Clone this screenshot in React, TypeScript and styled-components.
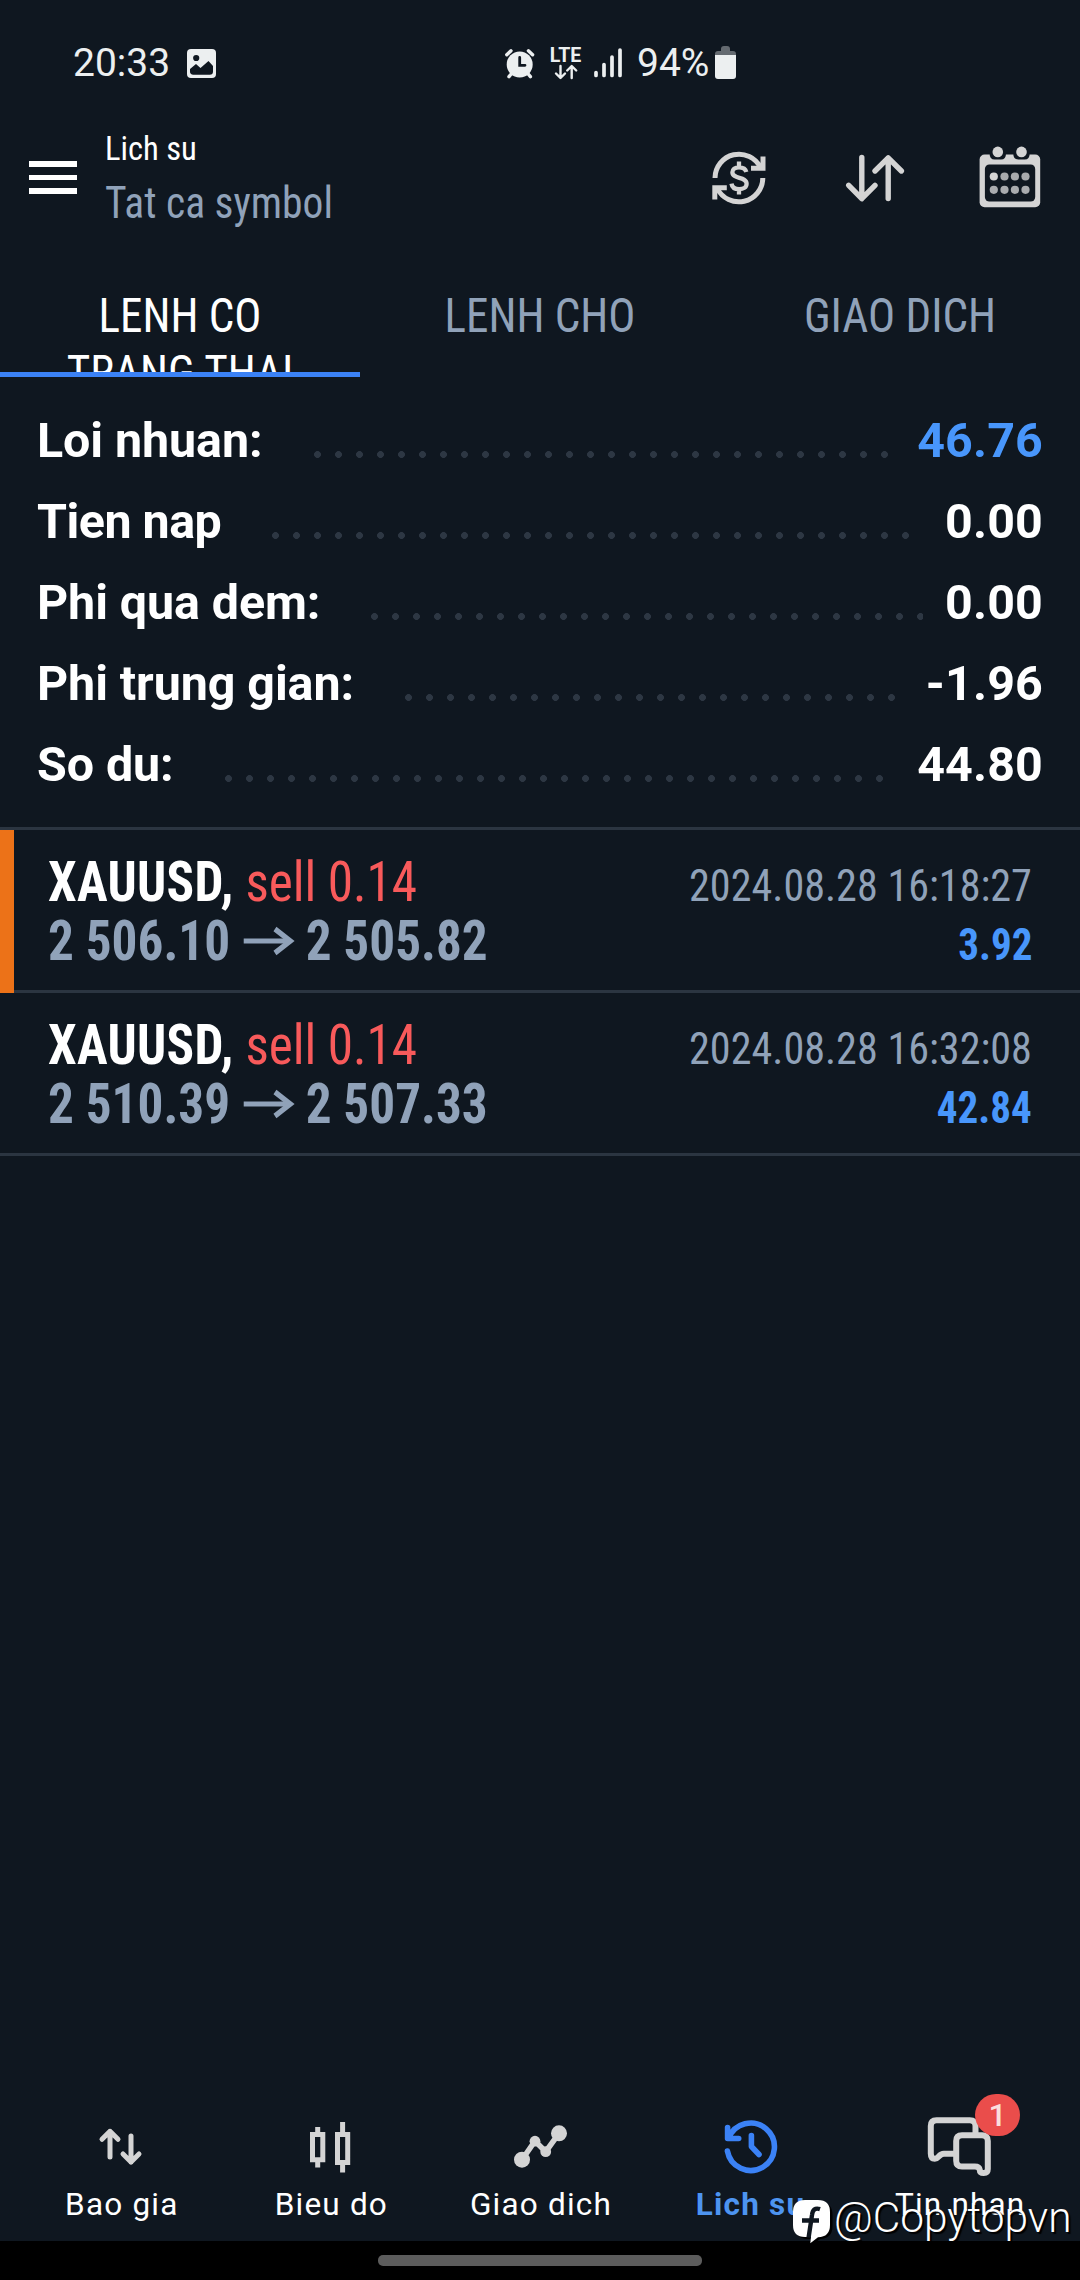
import React from "react";
import styled, { createGlobalStyle, css } from "styled-components";

const color = {
  bg: "#0f1720",
  white: "#ffffff",
  status: "#eceff0",
  muted: "#90a2b9",
  icon: "#d4d4d4",
  line: "#2b3541",
  dot: "#2d3743",
  blue: "#3b82f6",
  profit: "#4896fb",
  navActive: "#4d94f0",
  sell: "#f85a5b",
  marker: "#ec7218",
  badge: "#ea4d4b",
};

const GlobalStyle = createGlobalStyle`
  *, *::before, *::after { box-sizing: border-box; }
  body {
    margin: 0;
    background: ${color.bg};
    color: ${color.white};
    font-family: Roboto, "Liberation Sans", sans-serif;
  }
  svg { display: block; overflow: visible; flex: none; }
`;

const condensed = css`
  font-family: "Roboto Condensed", Roboto, sans-serif;
`;

const Screen = styled.div`
  position: relative;
  display: flex;
  flex-direction: column;
  width: 1080px;
  height: 2280px;
  overflow: hidden;
  background: ${color.bg};
`;

/* ---------- status bar ---------- */

const StatusBar = styled.div`
  display: flex;
  align-items: center;
  height: 123px;
  padding-top: 3px;
  font-size: 39px;
  line-height: 46px;
  color: ${color.status};
`;

const StatusLeft = styled.div`
  display: flex;
  align-items: center;
  gap: 17px;
  width: 505px;
  padding-left: 73px;
`;

const StatusRight = styled.div`
  display: flex;
  align-items: center;
  gap: 14px;
`;

const Network = styled.div`
  display: flex;
  flex-direction: column;
  align-items: center;
  width: 32px;
  padding-left: 1px;
  font-size: 19.5px;
  font-weight: 700;
  line-height: 17px;
`;

const Battery = styled.svg`
  margin: -2px 0 0 -8px;
`;

/* ---------- header ---------- */

const Header = styled.header`
  display: flex;
  align-items: center;
  height: 109px;
  padding: 0 40px 0 29px;
`;

const MenuButton = styled.div`
  display: flex;
  flex-direction: column;
  gap: 7.5px;
  width: 48px;
  margin-right: 27.5px;
`;

const MenuLine = styled.i`
  height: 5.8px;
  background: ${color.white};
`;

const Heading = styled.div`
  display: flex;
  flex-direction: column;
  flex: 1;
  ${condensed}
`;

const Title = styled.div`
  font-size: 34px;
  line-height: 50.6px;
  transform: scaleX(0.958);
  transform-origin: left;
`;

const Subtitle = styled.div`
  font-size: 44.5px;
  line-height: 58.2px;
  color: ${color.muted};
  transform: scaleX(0.933);
  transform-origin: left;
`;

const Actions = styled.div`
  display: flex;
  gap: 75.5px;
`;

/* ---------- tabs ---------- */

const Tabs = styled.nav`
  display: grid;
  grid-template-columns: repeat(3, 1fr);
  height: 145px;
`;

const Tab = styled.div<{ $active?: boolean }>`
  height: 145px;
  padding-top: 55px;
  overflow: hidden;
  text-align: center;
  border-bottom: 5px solid ${(p) => (p.$active ? color.blue : "transparent")};
  color: ${(p) => (p.$active ? color.white : color.muted)};
`;

const TabLabel = styled.span`
  display: inline-block;
  width: 260px;
  font-size: 48px;
  line-height: 57px;
  transform: scaleX(0.94);
  ${condensed}
`;

/* ---------- summary ---------- */

const Summary = styled.section`
  padding: 23px 37px 22px;
  border-bottom: 3px solid ${color.line};
`;

const SummaryRow = styled.div`
  display: flex;
  align-items: center;
  height: 81px;
  font-size: 48.4px;
  font-weight: 700;
  line-height: 81px;
  white-space: nowrap;
`;

const SummaryLabel = styled.span<{ $tracking?: number }>`
  letter-spacing: ${(p) => p.$tracking ?? -0.08}px;
`;

const Leader = styled.span`
  flex: 1;
  height: 7px;
  margin: 28px 22px 0 51px;
  background: radial-gradient(circle at 3.5px 3.5px, ${color.dot} 3.1px, transparent 3.7px) 0 0 / 21px 7px repeat-x;
`;

const Amount = styled.span<{ $profit?: boolean }>`
  letter-spacing: 0.15px;
  color: ${(p) => (p.$profit ? color.profit : color.white)};
`;

/* ---------- trades ---------- */

const TradeList = styled.main`
  flex: 1;
`;

const Trade = styled.article`
  display: flex;
  height: 163px;
`;

const Marker = styled.i`
  width: 14px;
  background: ${color.marker};
`;

const TradeBody = styled.div<{ $inset: number }>`
  flex: 1;
  display: flex;
  justify-content: space-between;
  padding: 0 48px 0 ${(p) => p.$inset}px;
  border-bottom: 3px solid ${color.line};
  line-height: 59px;
  white-space: nowrap;
  ${condensed}
`;

const Deal = styled.div`
  padding-top: 22.5px;
  font-size: 55px;
  font-weight: 700;
  transform: scaleX(0.932);
  transform-origin: left;
`;

const Instrument = styled.span`
  letter-spacing: 0.3px;
`;

const Side = styled.span`
  font-weight: 400;
  color: ${color.sell};
  letter-spacing: -0.1px;
`;

const Prices = styled.div`
  display: flex;
  color: ${color.muted};

  svg {
    margin: 14.5px 12px 0 15px;
  }
`;

const Outcome = styled.div`
  display: flex;
  flex-direction: column;
  align-items: flex-end;
  padding-top: 26.5px;
  font-size: 44px;
`;

const Time = styled.div`
  color: ${color.muted};
  transform: scaleX(0.958);
  transform-origin: right;
`;

const Profit = styled.div`
  font-weight: 700;
  color: ${color.profit};
  transform: scaleX(0.934);
  transform-origin: right;
`;

/* ---------- bottom navigation ---------- */

const BottomNav = styled.nav`
  display: grid;
  grid-template-columns: repeat(5, 1fr);
  padding: 0 16px 18px;
`;

const NavItem = styled.div<{ $active?: boolean }>`
  display: flex;
  flex-direction: column;
  align-items: center;
  color: ${(p) => (p.$active ? color.navActive : color.white)};
  font-size: 31.5px;
  font-weight: ${(p) => (p.$active ? 700 : 400)};
  line-height: 36px;
  letter-spacing: 1.2px;
  white-space: nowrap;
`;

const NavLabel = styled.span`
  padding: 1px 0 0 2px;
`;

const NavIcon = styled.div<{ $active?: boolean }>`
  position: relative;
  height: 78px;
  padding-top: 7px;
  color: ${(p) => (p.$active ? color.blue : color.icon)};
`;

const Badge = styled.span`
  position: absolute;
  top: -14px;
  left: 48px;
  width: 45px;
  height: 42px;
  border-radius: 21px;
  background: ${color.badge};
  color: #fbdedd;
  font-size: 32px;
  font-weight: 500;
  line-height: 43px;
  letter-spacing: 0;
  text-align: center;
`;

const GestureBar = styled.div`
  display: flex;
  justify-content: center;
  height: 39px;
  padding-top: 14px;
  background: #000;
`;

const GestureHandle = styled.i`
  width: 324px;
  height: 11px;
  border-radius: 5px;
  background: #5c5c5c;
`;

const Watermark = styled.div`
  position: absolute;
  left: 793px;
  top: 2195px;
  display: flex;
  gap: 3px;
  font-size: 42.4px;
  font-weight: 330;
  line-height: 46px;
  text-shadow: 2px 2px 1px #000;

  svg {
    margin-top: 5px;
  }
`;

/* ---------- icons ---------- */

const ImageIcon = () => (
  <svg width="29" height="29" viewBox="0 0 29 29">
    <rect width="29" height="29" rx="4" fill={color.status} />
    <circle cx="9.2" cy="9" r="3.1" fill={color.bg} />
    <path d="M3 22v-2l6-5 4.5 4 8-7L26 17v5.5a3.3 3.3 0 0 1-3.3 3.3H6.3A3.3 3.3 0 0 1 3 22z" fill={color.bg} />
  </svg>
);

const AlarmIcon = () => (
  <svg width="30" height="31" viewBox="0 0 30 31" fill="none" strokeLinecap="round">
    <circle cx="14.7" cy="16.5" r="13" fill={color.status} />
    <path d="M1.8 6.8L6 2.8M27.6 6.8l-4.2-4M4 28.6l3-3.6M25.4 28.6l-3-3.6" stroke={color.status} strokeWidth="3.4" />
    <path d="M14.7 9.5V17.3H20" stroke={color.bg} strokeWidth="2.8" />
  </svg>
);

const DataArrows = () => (
  <svg width="24" height="16" viewBox="0 0 24 16" fill="none" stroke={color.status} strokeWidth="2.4" strokeLinecap="round" strokeLinejoin="round">
    <path d="M6.5 2V13.5M2 9.5l4.500 4.500L11 9.500M17.700 14V2.300M13.200 6.500l4.500-4.500 4.500 4.500" />
  </svg>
);

const SignalIcon = () => (
  <svg width="28" height="30" viewBox="1 0 28 30" stroke={color.status} strokeWidth="3.7" strokeLinecap="round">
    <path d="M2 24.5V27.5M10 16.5V27.5M18 9V27.5M26 2V27.5" />
  </svg>
);

const BatteryIcon = () => (
  <Battery width="21" height="33" viewBox="0 0 21 33">
    <path d="M6 3q0-3 3-3h3q3 0 3 3v2h3q3 0 3 3v1H0V8q0-3 3-3h3z" fill="#646a70" />
    <path d="M0 9h21v21q0 3-3 3H3q-3 0-3-3z" fill={color.status} />
  </Battery>
);

const CurrencyIcon = () => (
  <svg width="60" height="60" viewBox="0 0 60 60" fill="none" stroke={color.icon} strokeWidth="5">
    <path d="M6 30A24 24 0 0 1 51.5 19.5M53.8 30A24 24 0 0 1 8.3 40.5" />
    <path d="M54 8.5V20.200H42M5.800 51.500V39.700H17.800" />
    <path d="M37.3 24c-.7-3-3.5-4.7-7.3-4.7-4.2 0-6.6 2-6.6 5 0 7.2 14.2 3.8 14.2 11.5 0 3.5-3.2 5.4-7.4 5.4-4.3 0-7.2-2.1-7.7-5.6M30 13.5v6M30 41v5.5" strokeWidth="4.3" />
  </svg>
);

const SortIcon = () => (
  <svg width="60" height="60" viewBox="0 0 60 60" fill="none" stroke={color.icon} strokeWidth="5.4" strokeLinecap="round" strokeLinejoin="round">
    <path d="M16.8 9.5V50.5M3.7 37.3L16.8 50.7 30 37.3M43.2 50.5V10M30 23L43.2 9.8 56.4 23" />
  </svg>
);

const CalendarIcon = () => (
  <svg width="60" height="60" viewBox="0 0 60 60">
    <rect x="-.4" y="6.5" width="60.6" height="52.7" rx="5" fill={color.icon} />
    <rect x="4.9" y="16.5" width="50.3" height="37" rx="4.5" fill={color.bg} />
    {[17.8, 41.5].map((x) => (
      <g key={x}>
        <path d={`M${x - 8.2} 5.5q0 6 5 6h6.4q5 0 5-6z`} fill={color.bg} />
        <circle cx={x} cy="3.9" r="5.3" fill={color.icon} />
      </g>
    ))}
    {[28.5, 41.8].map((y, row) =>
      [13.8, 24.5, 34.9, 45.5].map((x, col) => (
        <circle key={`${x}-${y}`} cx={x} cy={y} r="4.1" fill={row + col === 0 ? color.icon : "#a9abae"} />
      ))
    )}
  </svg>
);

const ArrowIcon = () => (
  <svg width="54" height="30" viewBox="0 0 54 30" fill="none" stroke={color.muted}>
    <path d="M0 15H50" strokeWidth="5" />
    <path d="M33.500 3L50 15 33.500 27" strokeWidth="5.400" />
  </svg>
);

const QuotesIcon = () => (
  <svg width="64" height="64" viewBox="0 0 64 64" fill="none" stroke="currentColor" strokeWidth="5" strokeLinecap="round" strokeLinejoin="round">
    <path d="M21 42V16.3M13 24.3l8-8 8 8M42 21V47M34 39l8 8 8-8" />
  </svg>
);

const CandlesIcon = () => (
  <svg width="64" height="64" viewBox="0 0 64 64" fill="none" stroke="currentColor" strokeWidth="5">
    <path d="M14.5 19.5h10.3v25.3H14.5zM19.7 12v6M19.7 47v5.5M39.5 19.5h10.2v28H39.5zM44.6 7v11M44.6 49v8.5" />
  </svg>
);

const TradeIcon = () => (
  <svg width="64" height="64" viewBox="0 0 64 64" fill="currentColor">
    <path d="M14 44.7L27 26l10.7 10.7L51 18.3" fill="none" stroke="currentColor" strokeWidth="5.5" />
    <circle cx="14" cy="44.7" r="8" />
    <circle cx="27" cy="26.2" r="5.4" />
    <circle cx="37.7" cy="36.7" r="5.4" />
    <circle cx="51" cy="18.3" r="8" />
  </svg>
);

const HistoryIcon = () => (
  <svg width="64" height="64" viewBox="0 0 64 64" fill="none" stroke="currentColor" strokeWidth="5.6" strokeLinecap="round" strokeLinejoin="round">
    <path d="M9.4 36A23.7 23.7 0 1 0 10.6 23.3M9.6 12.5V23.5H20.7M33.4 20.5V31.5L41 39.5" />
  </svg>
);

const ChatIcon = () => (
  <svg width="64" height="64" viewBox="0 0 64 64" fill="none" stroke="currentColor" strokeWidth="6">
    <path d="M48.5 18V11q0-5.700-5.700-5.700H9.500Q3.800 5.300 3.800 11V38.500q0 5.200 4 5.200c4 0 4-5 9-5H28" />
    <path d="M35 20.3H55q5.8 0 5.8 5.8V54q0 4-4 4t-4-3q-.6-3.5-5-3.5H35q-5.8 0-5.8-5.8V26.1q0-5.8 5.8-5.8z" />
  </svg>
);

const PageLogo = () => (
  <svg width="38" height="44" viewBox="0 0 38 44">
    <path d="M13.5 2H26.5Q39.5 2 39.5 15V26Q39.5 38.5 27 39l-8.5 6.5L19 39H13Q2 38 2 26V14Q2 2 13.5 2z" fill="#000" />
    <path d="M12 0H25Q37 0 37 12V25Q37 37 25 37.2L17.3 43.3 18 37H12Q0 37 0 25V12Q0 0 12 0z" fill="#fff" />
    <path d="M27 9.2C22 7.5 19.6 10 19 15L15.600 37.500M9 20.500H26" fill="none" stroke={color.bg} strokeWidth="4.400" />
  </svg>
);

/* ---------- data ---------- */

const summary = [
  { label: "Loi nhuan:", value: "46.76", profit: true },
  { label: "Tien nap", value: "0.00", tracking: -0.5 },
  { label: "Phi qua dem:", value: "0.00" },
  { label: "Phi trung gian:", value: "-1.96" },
  { label: "So du:", value: "44.80" },
];

const trades = [
  { open: "2 506.10", close: "2 505.82", time: "2024.08.28 16:18:27", profit: "3.92", marked: true },
  { open: "2 510.39", close: "2 507.33", time: "2024.08.28 16:32:08", profit: "42.84", marked: false },
];

const nav = [
  { label: "Bao gia", Icon: QuotesIcon },
  { label: "Bieu do", Icon: CandlesIcon },
  { label: "Giao dich", Icon: TradeIcon },
  { label: "Lich su", Icon: HistoryIcon, active: true },
  { label: "Tin nhan", Icon: ChatIcon, badge: "1" },
];

export default function App() {
  return (
    <Screen>
      <GlobalStyle />
      <StatusBar>
        <StatusLeft>
          <span>20:33</span>
          <ImageIcon />
        </StatusLeft>
        <StatusRight>
          <AlarmIcon />
          <Network>
            <span>LTE</span>
            <DataArrows />
          </Network>
          <SignalIcon />
          <span>94%</span>
          <BatteryIcon />
        </StatusRight>
      </StatusBar>

      <Header>
        <MenuButton>
          <MenuLine />
          <MenuLine />
          <MenuLine />
        </MenuButton>
        <Heading>
          <Title>Lich su</Title>
          <Subtitle>Tat ca symbol</Subtitle>
        </Heading>
        <Actions>
          <CurrencyIcon />
          <SortIcon />
          <CalendarIcon />
        </Actions>
      </Header>

      <Tabs>
        <Tab $active>
          <TabLabel>LENH CO TRANG THAI</TabLabel>
        </Tab>
        <Tab>
          <TabLabel>LENH CHO</TabLabel>
        </Tab>
        <Tab>
          <TabLabel>GIAO DICH</TabLabel>
        </Tab>
      </Tabs>

      <Summary>
        {summary.map((row) => (
          <SummaryRow key={row.label}>
            <SummaryLabel $tracking={row.tracking}>{row.label}</SummaryLabel>
            <Leader />
            <Amount $profit={row.profit}>{row.value}</Amount>
          </SummaryRow>
        ))}
      </Summary>

      <TradeList>
        {trades.map((trade) => (
          <Trade key={trade.time}>
            {trade.marked && <Marker />}
            <TradeBody $inset={trade.marked ? 33.5 : 47.5}>
              <Deal>
                <div>
                  <Instrument>XAUUSD, </Instrument>
                  <Side>sell 0.14</Side>
                </div>
                <Prices>
                  <span>{trade.open}</span>
                  <ArrowIcon />
                  <span>{trade.close}</span>
                </Prices>
              </Deal>
              <Outcome>
                <Time>{trade.time}</Time>
                <Profit>{trade.profit}</Profit>
              </Outcome>
            </TradeBody>
          </Trade>
        ))}
      </TradeList>

      <BottomNav>
        {nav.map(({ label, Icon, active, badge }) => (
          <NavItem key={label} $active={active}>
            <NavIcon $active={active}>
              <Icon />
              {badge && <Badge>{badge}</Badge>}
            </NavIcon>
            <NavLabel>{label}</NavLabel>
          </NavItem>
        ))}
      </BottomNav>

      <GestureBar>
        <GestureHandle />
      </GestureBar>

      <Watermark>
        <PageLogo />
        <span>@Copytopvn</span>
      </Watermark>
    </Screen>
  );
}
